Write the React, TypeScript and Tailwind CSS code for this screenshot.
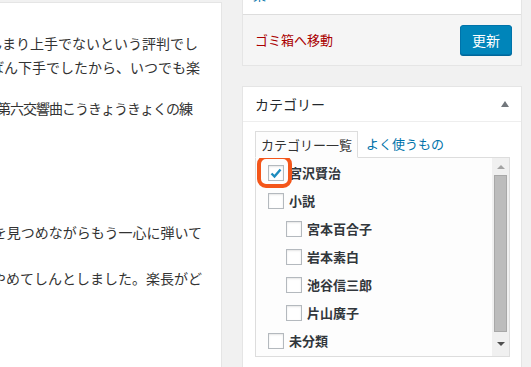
const jp = "font-['Noto_Sans_CJK_JP','Noto_Sans',sans-serif]";

const lines = [
  { text: "けれどもあんまり上手でないという評判でし", cls: "mt-[28px] pr-[23px]" },
  { text: "楽手のなかではいちばん下手でしたから、いつでも楽", cls: "pr-[21px]" },
  { text: "今度の町の音楽会へ出す第六交響曲こうきょうきょくの練", cls: "mt-[17px] pr-[29px] tracking-[-1px]" },
  { text: "眼を皿のようにして楽譜を見つめながらもう一心に弾いて", cls: "mt-[100px] pr-[19px]" },
  { text: "みんなぴたりと曲をやめてしんとしました。楽長がど", cls: "mt-[22px] pr-[19px]" },
];

const cats = [
  { name: "宮沢賢治", depth: 0, checked: true },
  { name: "小説", depth: 0 },
  { name: "宮本百合子", depth: 1 },
  { name: "岩本素白", depth: 1 },
  { name: "池谷信三郎", depth: 1 },
  { name: "片山廣子", depth: 1 },
  { name: "未分類", depth: 0 },
];

function Checkbox({ checked }: { checked?: boolean }) {
  return (
    <span className="w-4 h-4 shrink-0 border border-[#b4b9be] bg-white shadow-[inset_0_1px_2px_rgba(0,0,0,0.1)] flex items-center justify-center">
      {checked ? (
        <svg width="14" height="14" viewBox="0 0 14 14">
          <path d="M2.5 7.5 L5.5 10.5 L11.5 3.5" fill="none" stroke="#1e8cbe" strokeWidth="2.4" />
        </svg>
      ) : null}
    </span>
  );
}

function Editor() {
  return (
    <div className="w-[222px] shrink-0 mt-[2px] bg-white border-t border-r border-[#e5e5e5] text-[14px] text-[#333] overflow-hidden">
      {lines.map((l) => (
        <div key={l.text} className={`flex justify-end overflow-hidden leading-6 h-6 ${l.cls}`}>
          <span className="whitespace-nowrap shrink-0">{l.text}</span>
        </div>
      ))}
    </div>
  );
}

function PublishBox() {
  return (
    <div className="bg-white border-x border-b border-[#e5e5e5]">
      <div className="h-[14px] overflow-hidden">
        <div className="mt-[-14px] pl-[10px] text-[13px] leading-[18px] text-[#0073aa]">楽</div>
      </div>
      <div className="h-[51px] border-t border-[#ddd] bg-[#f5f5f5] flex items-center justify-between pl-[12px] pr-[9px]">
        <span className="text-[13px] text-[#a00]">ゴミ箱へ移動</span>
        <button className="w-[52px] h-[30px] rounded-[3px] bg-[#0085ba] border border-[#0073aa] shadow-[0_1px_0_#006799] text-white text-[14px] leading-none">
          更新
        </button>
      </div>
    </div>
  );
}

function ScrollBar() {
  return (
    <div className="w-[17px] shrink-0 bg-[#f0f0f0] flex flex-col items-center">
      <div className="h-[17px] flex items-center justify-center pt-[1px]">
        <span className="w-0 h-0 border-x-[4px] border-x-transparent border-b-[4px] border-b-[#a3a3a3]" />
      </div>
      <div className="w-[13px] h-[157px] bg-[#bcbcbc] border border-[#a8a8a8]" />
      <div className="flex-1 flex items-center justify-center">
        <span className="w-0 h-0 border-x-[4px] border-x-transparent border-t-[4px] border-t-[#505050]" />
      </div>
    </div>
  );
}

function CategoryBox() {
  return (
    <div className="mt-[20px] bg-white border border-[#e5e5e5] pb-[20px]">
      <div className="h-[35px] border-b border-[#eee] flex items-center justify-between pl-[12px] pr-[12px]">
        <span className="text-[14px] text-[#23282d]">カテゴリー</span>
        <span className="w-0 h-0 border-x-[4px] border-x-transparent border-b-[6px] border-b-[#72777c]" />
      </div>
      <div className="pt-[9px] pl-[12px] pr-[11px]">
        <div className="flex items-end text-[13px]">
          <div className="relative z-10 h-[27px] -mb-px px-[5px] border border-[#ddd] border-b-[#fdfdfd] bg-[#fdfdfd] text-[#333] flex items-center">
            カテゴリー一覧
          </div>
          <span className="ml-[8px] h-[26px] flex items-center text-[#0073aa]">よく使うもの</span>
        </div>
        <div className="h-[200px] border border-[#ddd] bg-[#fdfdfd] flex">
          <div className="flex-1 pt-[1px] pl-[12px]">
            {cats.map((c) => (
              <div key={c.name} className={`h-7 flex items-center gap-[5px] ${c.depth ? "ml-[18px]" : ""}`}>
                <Checkbox checked={c.checked} />
                <span className="text-[13px] font-bold text-[#32373c]">{c.name}</span>
              </div>
            ))}
          </div>
          <ScrollBar />
        </div>
      </div>
    </div>
  );
}

export default function App() {
  return (
    <div className={`relative w-[531px] h-[367px] overflow-hidden bg-[#f1f1f1] flex ${jp}`}>
      <Editor />
      <div className="ml-[20px] w-[280px] shrink-0">
        <PublishBox />
        <CategoryBox />
      </div>
      <div className="absolute left-[257px] top-[155px] w-[35px] h-[33px] border-4 border-[#f4561a] rounded-[9px]" />
    </div>
  );
}
